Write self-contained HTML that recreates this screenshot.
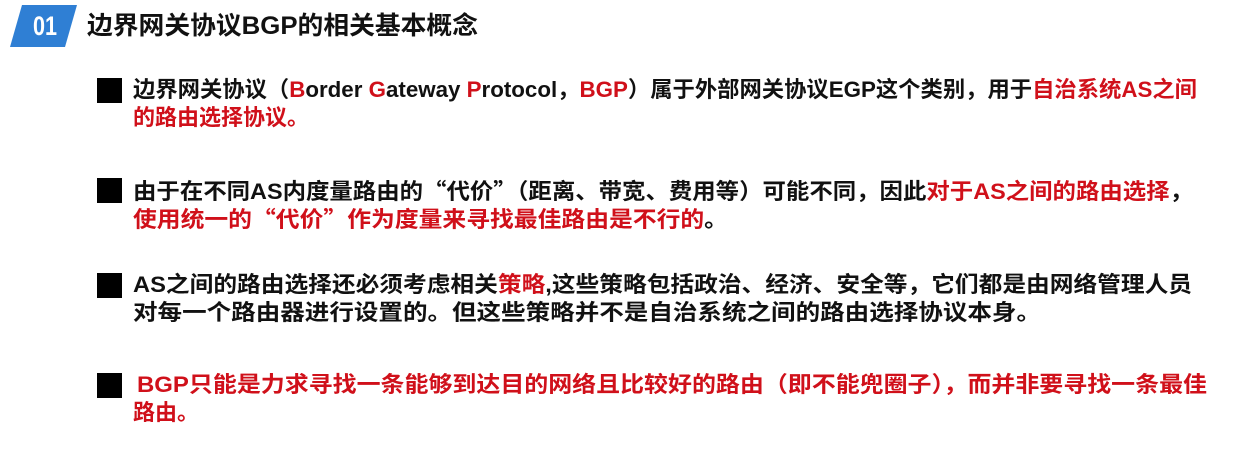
<!DOCTYPE html><html><head><meta charset="utf-8"><style>
body{margin:0;width:1235px;height:468px;background:#fff;overflow:hidden;position:relative;font-family:"Liberation Sans","Noto Sans CJK SC",sans-serif;font-weight:bold;color:#111}
.l{position:absolute;left:133px;font-size:22px;white-space:nowrap;line-height:28px;transform-origin:0 50%}
.r{color:#d0101a}
.q{font-family:"Noto Sans CJK SC",sans-serif}
.b{position:absolute;left:97px;width:25px;height:25px;background:#000}
</style></head><body>
<div style="position:absolute;left:10px;top:5px;width:67px;height:42px;background:#2f7fd4;clip-path:polygon(12px 0,67px 0,55px 42px,0 42px)"></div>
<div style="position:absolute;left:30px;top:8px;font-size:27px;color:#fff;line-height:36px;transform:scaleX(.8)">01</div>
<div class="l" id="t" style="left:87px;top:10px;font-size:25px;line-height:32px">边界网关协议BGP的相关基本概念</div>
<div class="b" style="top:78px"></div>
<div class="l" id="a1" style="top:76px">边界网关协议（<span class="r">B</span>order <span class="r">G</span>ateway <span class="r">P</span>rotocol，<span class="r">BGP</span>）属于外部网关协议EGP这个类别，用于<span class="r">自治系统AS之间</span></div>
<div class="l r" style="top:104px">的路由选择协议。</div>
<div class="b" style="top:178px"></div>
<div class="l" id="a2" style="top:176px">由于在不同AS内度量路由的<span class="q">“</span>代价<span class="q">”</span>（距离、带宽、费用等）可能不同，因此<span class="r">对于AS之间的路由选择</span>，</div>
<div class="l r" id="a3" style="top:204px">使用统一的<span class="q">“</span>代价<span class="q">”</span>作为度量来寻找最佳路由是不行的<span style="color:#111">。</span></div>
<div class="b" style="top:273px"></div>
<div class="l" id="a4" style="top:271px">AS之间的路由选择还必须考虑相关<span class="r">策略</span>,这些策略包括政治、经济、安全等，它们都是由网络管理人员</div>
<div class="l" id="a5" style="top:299px">对每一个路由器进行设置的。但这些策略并不是自治系统之间的路由选择协议本身。</div>
<div class="b" style="top:373px"></div>
<div class="l r" id="a6" style="top:371px;left:137px">BGP只能是力求寻找一条能够到达目的网络且比较好的路由（即不能兜圈子），而并非要寻找一条最佳</div>
<div class="l r" style="top:399px">路由。</div>
<script>
var w={t:391,a1:1064,a2:1060,a3:595,a4:1059,a5:908,a6:1070};
for(var k in w){var e=document.getElementById(k);var s=w[k]/e.getBoundingClientRect().width;e.style.transform='scaleX('+s+')';}
</script>
</body></html>
